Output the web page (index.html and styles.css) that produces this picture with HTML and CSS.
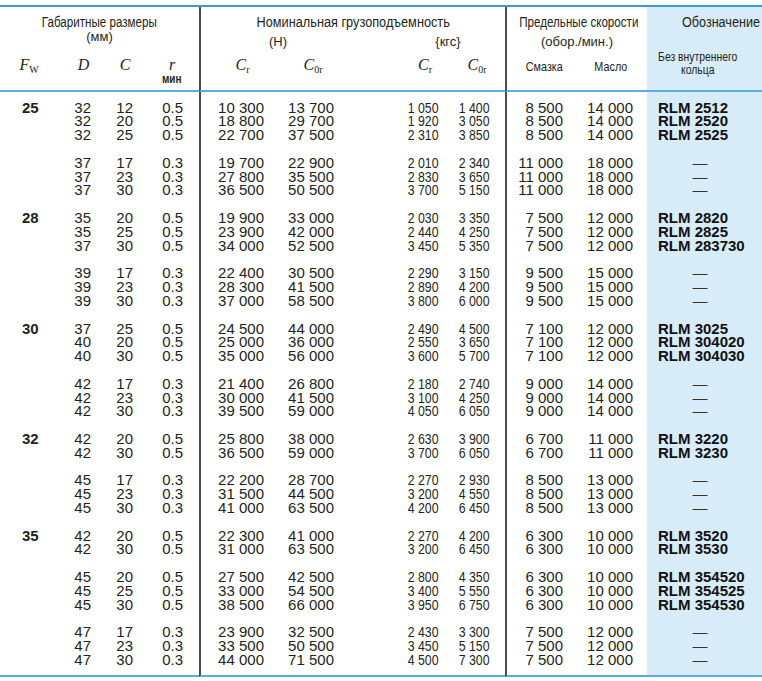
FILE: index.html
```html
<!DOCTYPE html>
<html lang="ru">
<head>
<meta charset="utf-8">
<title>Таблица</title>
<link rel="stylesheet" href="styles.css">
</head>
<body>
<div class="tbl">
  <div class="h1 s4"><span class="cn">Габаритные размеры</span></div>
  <div class="h1 s4 vl"><span class="cn wide">Номинальная грузоподъемность</span></div>
  <div class="h1 s2 vl"><span class="cn">Предельные скорости</span></div>
  <div class="h1 blue ob"><span class="cn cl">Обозначение</span></div>

  <div class="h2 s4 mm">(мм)</div>
  <div class="h2 s2 vl un">(Н)</div>
  <div class="h2 s2 kgs un">{кгс}</div>
  <div class="h2 s2 vl un">(обор./мин.)</div>
  <div class="h2 blue"></div>

  <div class="h3 c1 sym"><i>F</i><sub>W</sub></div>
  <div class="h3 c2 sym"><i>D</i></div>
  <div class="h3 c3 sym"><i>C</i></div>
  <div class="h3 c4 sym"><i>r</i><span class="min"><span class="cn">мин</span></span></div>
  <div class="h3 c5 sym"><i>C</i><sub>r</sub></div>
  <div class="h3 c6 sym"><i>C</i><sub>0r</sub></div>
  <div class="h3 c7 sym"><i>C</i><sub>r</sub></div>
  <div class="h3 c8 sym"><i>C</i><sub>0r</sub></div>
  <div class="h3 c9 sub3"><span class="cn">Смазка</span></div>
  <div class="h3 c10 sub3"><span class="cn">Масло</span></div>
  <div class="h3 c11 blue bez"><span class="cn">Без внутреннего<br>кольца</span></div>

  <div class="grp first">
    <div class="d c1"><b>25</b></div>
    <div class="d c2">32<br>32<br>32</div>
    <div class="d c3">12<br>20<br>25</div>
    <div class="d c4">0.5<br>0.5<br>0.5</div>
    <div class="d c5">10 300<br>18 800<br>22 700</div>
    <div class="d c6">13 700<br>29 700<br>37 500</div>
    <div class="d c7"><span class="nx">1 050<br>1 920<br>2 310</span></div>
    <div class="d c8"><span class="nx">1 400<br>3 050<br>3 850</span></div>
    <div class="d c9">8 500<br>8 500<br>8 500</div>
    <div class="d c10">14 000<br>14 000<br>14 000</div>
    <div class="d c11 blue">RLM 2512<br>RLM 2520<br>RLM 2525</div>
  </div>

  <div class="grp">
    <div class="d c1"></div>
    <div class="d c2">37<br>37<br>37</div>
    <div class="d c3">17<br>23<br>30</div>
    <div class="d c4">0.3<br>0.3<br>0.3</div>
    <div class="d c5">19 700<br>27 800<br>36 500</div>
    <div class="d c6">22 900<br>35 500<br>50 500</div>
    <div class="d c7"><span class="nx">2 010<br>2 830<br>3 700</span></div>
    <div class="d c8"><span class="nx">2 340<br>3 650<br>5 150</span></div>
    <div class="d c9">11 000<br>11 000<br>11 000</div>
    <div class="d c10">18 000<br>18 000<br>18 000</div>
    <div class="d c11 blue dash">—<br>—<br>—</div>
  </div>

  <div class="grp">
    <div class="d c1"><b>28</b></div>
    <div class="d c2">35<br>35<br>37</div>
    <div class="d c3">20<br>25<br>30</div>
    <div class="d c4">0.5<br>0.5<br>0.5</div>
    <div class="d c5">19 900<br>23 900<br>34 000</div>
    <div class="d c6">33 000<br>42 000<br>52 500</div>
    <div class="d c7"><span class="nx">2 030<br>2 440<br>3 450</span></div>
    <div class="d c8"><span class="nx">3 350<br>4 250<br>5 350</span></div>
    <div class="d c9">7 500<br>7 500<br>7 500</div>
    <div class="d c10">12 000<br>12 000<br>12 000</div>
    <div class="d c11 blue">RLM 2820<br>RLM 2825<br>RLM 283730</div>
  </div>

  <div class="grp">
    <div class="d c1"></div>
    <div class="d c2">39<br>39<br>39</div>
    <div class="d c3">17<br>23<br>30</div>
    <div class="d c4">0.3<br>0.3<br>0.3</div>
    <div class="d c5">22 400<br>28 300<br>37 000</div>
    <div class="d c6">30 500<br>41 500<br>58 500</div>
    <div class="d c7"><span class="nx">2 290<br>2 890<br>3 800</span></div>
    <div class="d c8"><span class="nx">3 150<br>4 200<br>6 000</span></div>
    <div class="d c9">9 500<br>9 500<br>9 500</div>
    <div class="d c10">15 000<br>15 000<br>15 000</div>
    <div class="d c11 blue dash">—<br>—<br>—</div>
  </div>

  <div class="grp">
    <div class="d c1"><b>30</b></div>
    <div class="d c2">37<br>40<br>40</div>
    <div class="d c3">25<br>20<br>30</div>
    <div class="d c4">0.5<br>0.5<br>0.5</div>
    <div class="d c5">24 500<br>25 000<br>35 000</div>
    <div class="d c6">44 000<br>36 000<br>56 000</div>
    <div class="d c7"><span class="nx">2 490<br>2 550<br>3 600</span></div>
    <div class="d c8"><span class="nx">4 500<br>3 650<br>5 700</span></div>
    <div class="d c9">7 100<br>7 100<br>7 100</div>
    <div class="d c10">12 000<br>12 000<br>12 000</div>
    <div class="d c11 blue">RLM 3025<br>RLM 304020<br>RLM 304030</div>
  </div>

  <div class="grp">
    <div class="d c1"></div>
    <div class="d c2">42<br>42<br>42</div>
    <div class="d c3">17<br>23<br>30</div>
    <div class="d c4">0.3<br>0.3<br>0.3</div>
    <div class="d c5">21 400<br>30 000<br>39 500</div>
    <div class="d c6">26 800<br>41 500<br>59 000</div>
    <div class="d c7"><span class="nx">2 180<br>3 100<br>4 050</span></div>
    <div class="d c8"><span class="nx">2 740<br>4 250<br>6 050</span></div>
    <div class="d c9">9 000<br>9 000<br>9 000</div>
    <div class="d c10">14 000<br>14 000<br>14 000</div>
    <div class="d c11 blue dash">—<br>—<br>—</div>
  </div>

  <div class="grp">
    <div class="d c1"><b>32</b></div>
    <div class="d c2">42<br>42</div>
    <div class="d c3">20<br>30</div>
    <div class="d c4">0.5<br>0.5</div>
    <div class="d c5">25 800<br>36 500</div>
    <div class="d c6">38 000<br>59 000</div>
    <div class="d c7"><span class="nx">2 630<br>3 700</span></div>
    <div class="d c8"><span class="nx">3 900<br>6 050</span></div>
    <div class="d c9">6 700<br>6 700</div>
    <div class="d c10">11 000<br>11 000</div>
    <div class="d c11 blue">RLM 3220<br>RLM 3230</div>
  </div>

  <div class="grp">
    <div class="d c1"></div>
    <div class="d c2">45<br>45<br>45</div>
    <div class="d c3">17<br>23<br>30</div>
    <div class="d c4">0.3<br>0.3<br>0.3</div>
    <div class="d c5">22 200<br>31 500<br>41 000</div>
    <div class="d c6">28 700<br>44 500<br>63 500</div>
    <div class="d c7"><span class="nx">2 270<br>3 200<br>4 200</span></div>
    <div class="d c8"><span class="nx">2 930<br>4 550<br>6 450</span></div>
    <div class="d c9">8 500<br>8 500<br>8 500</div>
    <div class="d c10">13 000<br>13 000<br>13 000</div>
    <div class="d c11 blue dash">—<br>—<br>—</div>
  </div>

  <div class="grp">
    <div class="d c1"><b>35</b></div>
    <div class="d c2">42<br>42</div>
    <div class="d c3">20<br>30</div>
    <div class="d c4">0.5<br>0.5</div>
    <div class="d c5">22 300<br>31 000</div>
    <div class="d c6">41 000<br>63 500</div>
    <div class="d c7"><span class="nx">2 270<br>3 200</span></div>
    <div class="d c8"><span class="nx">4 200<br>6 450</span></div>
    <div class="d c9">6 300<br>6 300</div>
    <div class="d c10">10 000<br>10 000</div>
    <div class="d c11 blue">RLM 3520<br>RLM 3530</div>
  </div>

  <div class="grp">
    <div class="d c1"></div>
    <div class="d c2">45<br>45<br>45</div>
    <div class="d c3">20<br>25<br>30</div>
    <div class="d c4">0.5<br>0.5<br>0.5</div>
    <div class="d c5">27 500<br>33 000<br>38 500</div>
    <div class="d c6">42 500<br>54 500<br>66 000</div>
    <div class="d c7"><span class="nx">2 800<br>3 400<br>3 950</span></div>
    <div class="d c8"><span class="nx">4 350<br>5 550<br>6 750</span></div>
    <div class="d c9">6 300<br>6 300<br>6 300</div>
    <div class="d c10">10 000<br>10 000<br>10 000</div>
    <div class="d c11 blue">RLM 354520<br>RLM 354525<br>RLM 354530</div>
  </div>

  <div class="grp last">
    <div class="d c1"></div>
    <div class="d c2">47<br>47<br>47</div>
    <div class="d c3">17<br>23<br>30</div>
    <div class="d c4">0.3<br>0.3<br>0.3</div>
    <div class="d c5">23 900<br>33 500<br>44 000</div>
    <div class="d c6">32 500<br>50 500<br>71 500</div>
    <div class="d c7"><span class="nx">2 430<br>3 450<br>4 500</span></div>
    <div class="d c8"><span class="nx">3 300<br>5 150<br>7 300</span></div>
    <div class="d c9">7 500<br>7 500<br>7 500</div>
    <div class="d c10">12 000<br>12 000<br>12 000</div>
    <div class="d c11 blue dash">—<br>—<br>—</div>
  </div>
</div>
</body>
</html>
```

FILE: styles.css
```css
* { box-sizing: border-box; }
html, body { margin: 0; padding: 0; background: #ffffff; }
body {
  width: 762px;
  height: 681px;
  overflow: hidden;
  color: #231f20;
  font-family: "Liberation Sans", Arial, sans-serif;
}

.tbl {
  display: grid;
  grid-template-columns: 55px 49px 46px 49px 76px 80px 95px 55px 75px 67px 115px;
  width: 762px;
  margin-top: 5px;
  border-top: 2px solid #3a9ad8;
}

.s4 { grid-column: span 4; }
.s2 { grid-column: span 2; }

.vl, .c5, .c9 { border-left: 2px solid #4a4a4a; }
.blue { background: #d7ebf8; }

/* condensed look: Liberation Sans squeezed horizontally */
.cn {
  display: inline-block;
  transform: scaleX(0.83);
  transform-origin: center;
}
.cn.wide { transform: scaleX(0.91); }
.cn.cl { transform: scaleX(0.9); transform-origin: left; }
.nx {
  display: inline-block;
  transform: scaleX(0.82);
  transform-origin: right;
}

/* header row 1 */
.h1 {
  height: 23px;
  padding-top: 7px;
  font-size: 14px;
  line-height: 16px;
  text-align: center;
  white-space: nowrap;
}
.h1.ob { text-align: left; padding-left: 35px; }

/* header row 2 */
.h2 {
  height: 20px;
  font-size: 13px;
  line-height: 14px;
  text-align: center;
  white-space: nowrap;
}
.h2.mm { padding-top: 0; }
.h2.un { padding-top: 5px; }
.h2.kgs { padding-left: 36px; }

/* header row 3 */
.h3 {
  height: 42px;
  border-bottom: 2px solid #5aade2;
  text-align: center;
  white-space: nowrap;
}
.h3.sym {
  padding-top: 7px;
  font-family: "Liberation Serif", "Times New Roman", serif;
  font-size: 16px;
  line-height: 16px;
}
.h3.sym sub {
  font-size: 10px;
  line-height: 0;
  vertical-align: -3px;
  font-style: normal;
}
.min {
  display: block;
  font-family: "Liberation Sans", Arial, sans-serif;
  font-size: 12px;
  font-weight: bold;
  line-height: 12px;
}
.h3.sub3 {
  padding-top: 9px;
  font-size: 13px;
  line-height: 16px;
}
.h3.bez {
  padding-top: 1px;
  font-size: 12.5px;
  line-height: 13px;
}

.h3.c1 { padding-left: 3px; }
.h3.c2 { padding-left: 8px; }
.h3.c3 { padding-right: 4px; }
.h3.c4 { padding-right: 5px; }
.h3.c5 { padding-left: 9px; }
.h3.c6 { padding-right: 4px; }
.h3.c7 { padding-left: 45px; }
.h3.c8 { padding-right: 1px; }
.h3.c9 { padding-left: 1px; }
.h3.c10 { padding-right: 5px; }
.h3.c11 { padding-right: 14px; }

/* data */
.grp { display: contents; }
.d {
  padding-top: 13.81px;
  font-size: 15px;
  line-height: 13.81px;
  white-space: nowrap;
  text-align: right;
}
.grp.first > .d { padding-top: 8.6px; }
.grp.last > .d { padding-bottom: 8px; border-bottom: 2px solid #5aade2; }

.d.c1 { text-align: left; padding-left: 22px; }
.d.c2 { padding-right: 13px; }
.d.c3 { padding-right: 17px; }
.d.c4 { padding-right: 16px; }
.d.c5 { padding-right: 11px; }
.d.c6 { padding-right: 21px; }
.d.c7 { padding-right: 11px; }
.d.c8 { padding-right: 15px; }
.d.c9 { padding-right: 17px; }
.d.c10 { padding-right: 14px; }
.d.c11 {
  text-align: left;
  padding-left: 11px;
  font-weight: bold;
  color: #111;
}
.d.c11.dash {
  text-align: center;
  padding-left: 0;
  padding-right: 9px;
  font-weight: normal;
  color: #333;
}
```
